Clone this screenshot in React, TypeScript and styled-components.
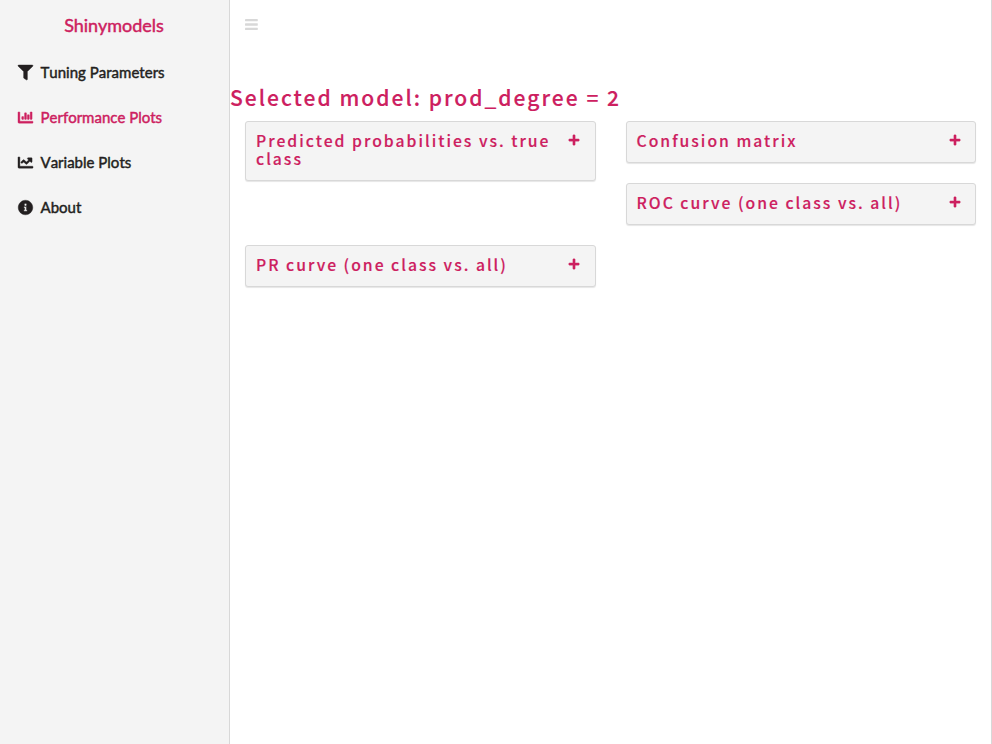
import React from "react";
import styled, { createGlobalStyle } from "styled-components";
import { FaFilter, FaChartBar, FaChartLine, FaInfoCircle, FaPlus } from "react-icons/fa";

const GlobalStyle = createGlobalStyle`
  * { box-sizing: border-box; }
  body { margin: 0; background: #fff; }
`;

const Page = styled.div`
  display: flex;
  width: 100%;
  height: 744px;
  overflow: hidden;
`;

const Sidebar = styled.aside`
  flex: 0 0 230px;
  background: #f4f4f4;
  border-right: 1px solid #d8d8d8;
  font-family: Lato, sans-serif;
  font-weight: 400;
  -webkit-text-stroke: 0.45px currentColor;
`;

const Logo = styled.div`
  height: 50px;
  line-height: 50px;
  padding-right: 1px;
  text-align: center;
  font-size: 18px;
  color: #cd205f;
`;

const NavItem = styled.a<{ $active?: boolean }>`
  display: flex;
  align-items: center;
  height: 45px;
  padding: 0 0 1px 18px;
  gap: 7.5px;
  font-size: 15px;
  font-kerning: none;
  white-space: nowrap;
  color: ${(p) => (p.$active ? "#cd205f" : "#231f20")};
  svg { flex: none; stroke: currentColor; stroke-width: 14px; overflow: visible; }
`;

const Main = styled.main`
  flex: 1;
  min-width: 0;
  border-right: 1px solid #d8d8d8;
  color: #cd205f;
  font-family: "Noto Sans CJK SC", sans-serif;
  -webkit-text-stroke: 0.15px currentColor;
`;

const TopBar = styled.header`
  height: 50px;
  padding: 19px 0 0 15px;
  svg { display: block; }
`;

const Title = styled.h1`
  margin: 34px 0 0;
  height: 27px;
  line-height: 26px;
  font-size: 21.05px;
  font-weight: 500;
  letter-spacing: 2px;
  white-space: nowrap;
`;

const Cards = styled.div`
  display: grid;
  grid-template-columns: 1fr 1fr;
  column-gap: 30px;
  padding: 10px 15px 0;
`;

const Column = styled.div<{ $gap: number }>`
  display: flex;
  flex-direction: column;
  gap: ${(p) => p.$gap}px;
`;

const Card = styled.section<{ $tall?: boolean }>`
  display: flex;
  justify-content: space-between;
  height: ${(p) => (p.$tall ? 60 : 42)}px;
  padding: 10px 14.5px 10px 10px;
  background: #f4f4f4;
  border: 1px solid #d8d8d8;
  border-radius: 3px;
  box-shadow: 0 1px 1px rgba(0, 0, 0, 0.1);
  svg { flex: none; margin-top: 2.4px; stroke: currentColor; stroke-width: 16px; }
`;

const CardTitle = styled.h3`
  margin: 0;
  font-size: 15.72px;
  font-weight: 500;
  line-height: 18px;
  letter-spacing: 2px;
`;

function Panel({ title, tall }: { title: string; tall?: boolean }) {
  return (
    <Card $tall={tall}>
      <CardTitle>{title}</CardTitle>
      <FaPlus size={12} />
    </Card>
  );
}

export default function App() {
  return (
    <Page>
      <GlobalStyle />
      <Sidebar>
        <Logo>Shinymodels</Logo>
        <NavItem><FaFilter size={15} />Tuning Parameters</NavItem>
        <NavItem $active><FaChartBar size={15} />Performance Plots</NavItem>
        <NavItem><FaChartLine size={15} />Variable Plots</NavItem>
        <NavItem><FaInfoCircle size={15} />About</NavItem>
      </Sidebar>
      <Main>
        <TopBar>
          <svg width="13" height="11" viewBox="0 0 13 11" fill="#d8d8d8">
            <rect y="0" width="12.8" height="2.2" rx=".4" />
            <rect y="4.3" width="12.8" height="2.4" rx=".4" />
            <rect y="8.8" width="12.8" height="2.2" rx=".4" />
          </svg>
        </TopBar>
        <Title>Selected model: prod_degree = 2</Title>
        <Cards>
          <Column $gap={64}>
            <Panel tall title="Predicted probabilities vs. true class" />
            <Panel title="PR curve (one class vs. all)" />
          </Column>
          <Column $gap={20}>
            <Panel title="Confusion matrix" />
            <Panel title="ROC curve (one class vs. all)" />
          </Column>
        </Cards>
      </Main>
    </Page>
  );
}
